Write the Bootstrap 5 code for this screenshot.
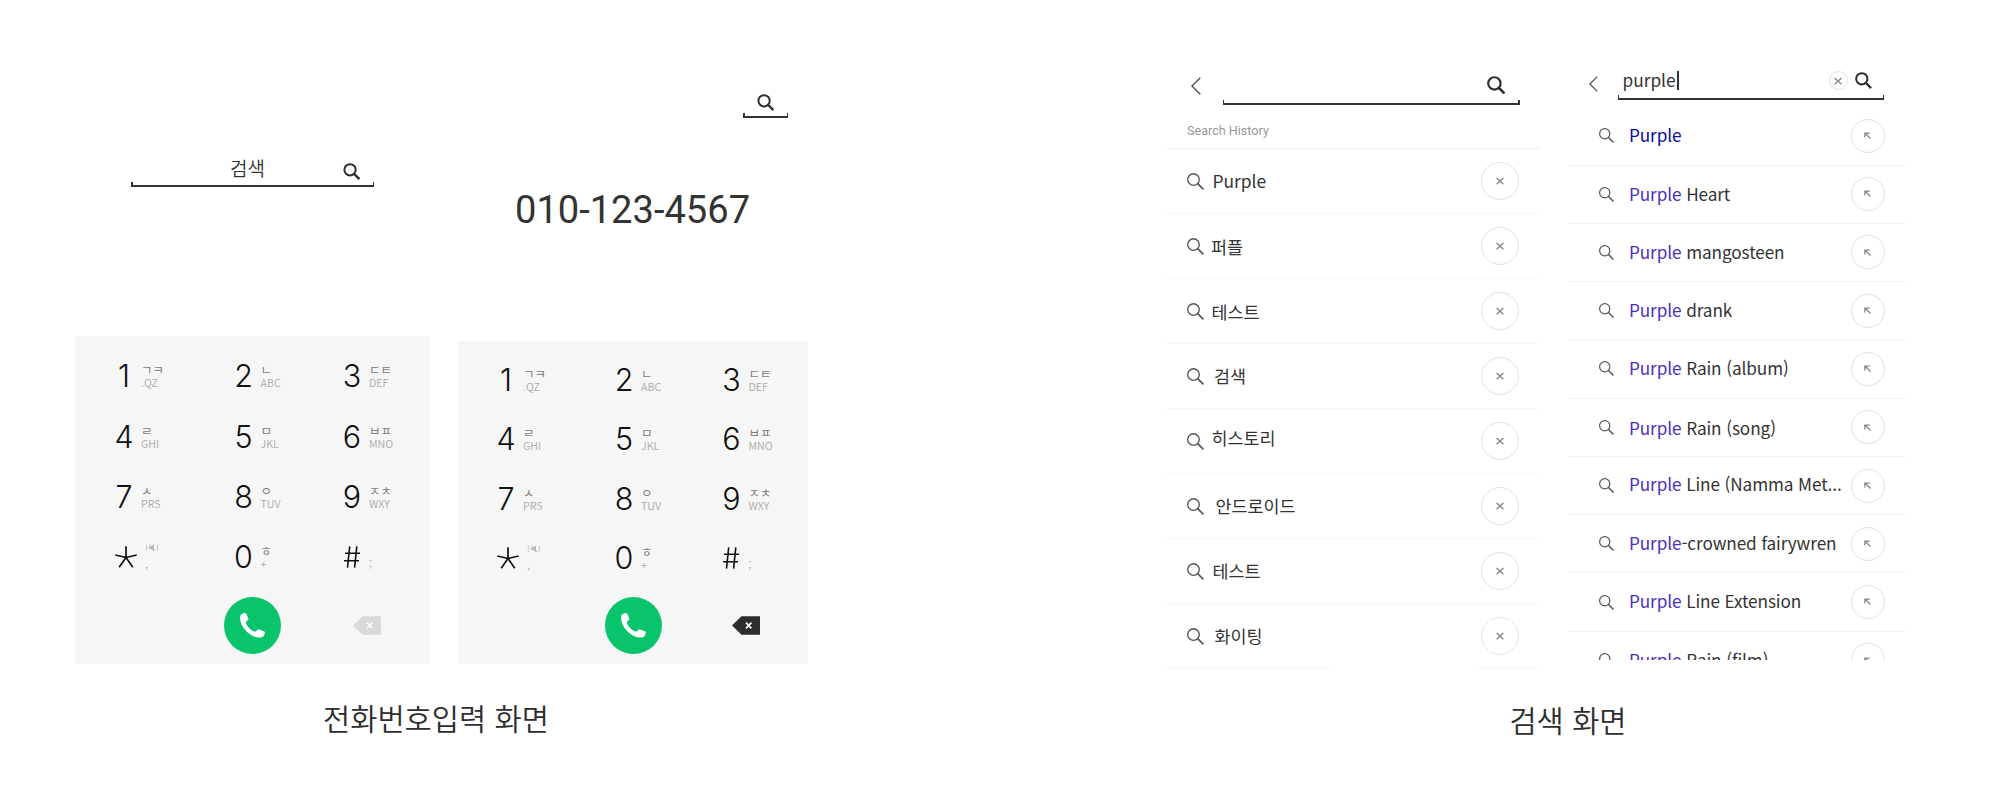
<!DOCTYPE html>
<html lang="ko">
<head>
<meta charset="utf-8">
<meta name="viewport" content="width=device-width, initial-scale=1">
<title>전화번호입력 화면 / 검색 화면</title>
<link href="https://cdn.jsdelivr.net/npm/bootstrap@5.3.0/dist/css/bootstrap.min.css" rel="stylesheet">
<style>
  body { font-family: "Noto Sans CJK KR", "Noto Sans", sans-serif; color: #333; background: #fff; }
  svg { display: block; flex: none; }
  .board { width: 2000px; height: 800px; padding-left: 75px; overflow: hidden; }
  .caption-line { font-size: 29.6px; font-weight: 350; line-height: 40px; height: 40px; color: #2d2d2d; white-space: nowrap; }

  /* underlined search field with short upturned ends */
  .field-line { position: relative; border-bottom: 2px solid #333; }
  .field-line::before, .field-line::after { content: ""; position: absolute; bottom: 0; width: 1.5px; height: 3px; background: #333; }
  .field-line::before { left: 0; }
  .field-line::after { right: 0; }

  .dial-screens { width: 733px; gap: 28px; }
  .dial-a { width: 355px; }
  .dial-b { width: 350px; }
  .dial-top-a { height: 336px; padding: 147px 0 0 56px; }
  .dial-top-b { height: 341px; padding-top: 87px; }
  .field-a { width: 243px; height: 40px; padding: 6px 14px 0 0; }
  .field-a .hint { font-size: 19px; font-weight: 350; line-height: 29px; margin-left: 99px; }
  .field-b { width: 45px; height: 31px; margin-left: 285px; padding: 7px 0 0 14px; }
  .number { font-family: Roboto, sans-serif; font-size: 38.1px; line-height: 44px; margin: 69.5px 0 0 57px; white-space: nowrap; }

  .pad { display: grid; background: #f6f6f6; }
  .pad-a { height: 328px; padding: 10px 0 0 39px; grid-template-columns: 119.5px 108.5px 1fr; grid-template-rows: repeat(4, 60.4px) 75.4px; }
  .pad-b { height: 323px; padding: 9.3px 0 0 38px; grid-template-columns: 118px 107.4px 1fr; grid-template-rows: repeat(4, 59.4px) 75.6px; }
  .digit { width: 20px; margin-right: 7px; display: flex; justify-content: center; font-family: Inter, sans-serif; font-weight: 300; font-size: 30.5px; line-height: 36px; color: #111; }
  .sub { display: flex; flex-direction: column; width: 30px; white-space: nowrap; }
  .sub b { font-weight: 400; font-size: 12.5px; line-height: 13px; height: 13px; color: #808080; }
  .sub i { font-style: normal; font-weight: 350; font-size: 10.7px; line-height: 13px; height: 13px; color: #aaa; }
  .call { width: 57px; height: 57px; border-radius: 50%; background: #0ac46b; margin-left: -10px; }
  .pad-b .call { margin-left: -9.5px; }
  .erase { margin-left: 11px; }

  .search-screens { width: 738px; margin-left: 358.5px; }
  .list-height { height: 700px; }
  .hist { width: 373px; }
  .hist-head { height: 104.5px; padding: 64px 0 0 24px; }
  .hist-head .back { margin: 13px 22px 0 0; }
  .hist-head .field-line { width: 297px; height: 40.5px; padding: 11.5px 14.5px 0 0; }
  .hist-title { font-family: Roboto, sans-serif; font-size: 12.6px; line-height: 16px; color: #999; height: 44.5px; padding: 18px 0 0 20.5px; border-bottom: 1px solid #f1f1f1; }
  .hist-row { height: 65.05px; padding: 0 20.5px 0 20.5px; border-bottom: 1.6px solid #f6f6f6; }
  .hist-row:last-child { border-image: linear-gradient(90deg, #f6f6f6 166.5px, #fff 166.5px, #fff 309px, #f6f6f6 309px) 1; }
  .row-text { font-size: 17.4px; font-weight: 400; line-height: 26px; white-space: nowrap; color: #333; }
  .ring { border: 1px solid #e2e2e2; border-radius: 50%; display: flex; align-items: center; justify-content: center; flex: none; }
  .ring-l { width: 38px; height: 38px; }
  .ring-m { width: 34px; height: 34px; }
  .ring-s { width: 19px; height: 19px; }

  .sugg { width: 337px; margin-left: 28px; height: 660px; overflow: hidden; }
  .sugg-head { height: 107.3px; padding: 62px 0 0 21px; }
  .sugg-head .back { margin: 13.5px 20px 0 0; }
  .sugg-head .field-line { width: 266.5px; height: 37.5px; padding: 2px 12.5px 0 5px; }
  .typed { font-size: 17.3px; line-height: 34px; font-weight: 400; margin-top: -2px; }
  .caret { width: 2px; height: 19px; background: #333; margin-left: 1px; }
  .sugg-row { height: 58.27px; padding: 0 20px 0 31px; border-bottom: 1.5px solid #f5f5f5; }
  .sugg-row .row-text { font-size: 17.2px; letter-spacing: -.1px; margin-left: 15.5px; }
  .hit { color: #4a2fbd; }
  .hit-first { color: #0b0b9e; }
</style>
</head>
<body>
<svg width="0" height="0" class="position-absolute">
  <symbol id="bold-search" viewBox="0 0 18 18"><circle cx="7.2" cy="7.2" r="6" fill="none" stroke="#2d2d2d" stroke-width="2.1"/><path d="M11.4 11.4 17 17" stroke="#2d2d2d" stroke-width="2.5"/></symbol>
  <symbol id="thin-search" viewBox="0 0 17 17"><circle cx="6.5" cy="6.5" r="5.8" fill="none" stroke="#555" stroke-width="1.35"/><path d="M10.7 10.7 16.4 16.4" stroke="#555" stroke-width="1.7"/></symbol>
  <symbol id="back" viewBox="0 0 10 18"><path d="M9.3.7.9 9l8.4 8.3" fill="none" stroke="#444" stroke-width="1.3"/></symbol>
  <symbol id="cross" viewBox="0 0 8 8"><path d="M.6.9l6.8 6.4M7.4.9.6 7.3" stroke="#888" stroke-width="1.4"/></symbol>
  <symbol id="arrow" viewBox="0 0 8 8"><path d="M.9 5.9V1.1h5.3M1.2 1.3 7 7" fill="none" stroke="#888" stroke-width="1.4"/></symbol>
  <symbol id="star" viewBox="0 0 22 22"><path d="M11 .2V11.5M11 11.5.3 9M11 11.5 21.7 9M11 11.5 4.2 21.3M11 11.5 17.8 21.3" stroke="#111" stroke-width="1.7"/></symbol>
  <symbol id="hash" viewBox="0 0 16 22"><path d="M5.7.3 3.5 21.7M12.8.3 10.6 21.7M1 7.3H16M0 14.7H15" stroke="#111" stroke-width="1.6"/></symbol>
  <symbol id="mute" viewBox="0 0 14 8"><path d="M1 .5 2 1.7 1 3 2 4.2 1 5.5 2 6.8M13 .5 12 1.7 13 3 12 4.2 13 5.5 12 6.8" fill="none" stroke="#b8b8b8" stroke-width=".9"/><path d="M4 2.5H6L9 .3V7L6 5H4z" fill="#b8b8b8"/><path d="M4.5.3 10.5 7" stroke="#b8b8b8" stroke-width=".9"/></symbol>
  <symbol id="phone" viewBox="0 0 25 25"><path d="M2.3.8 4.7.1Q6 0 6.6 1.4L8.3 5.4Q8.7 6.6 7.8 7.3L6 8.8V10.5Q8.6 16.2 14.3 18.6L16 18.4 17.4 16.7Q18.3 16.1 19.3 16.4L24 18.2Q25.1 18.8 24.8 20.1L24 22.6Q23.4 23.9 21.9 24.3 13.5 25.6 6.4 18.2-.3 11.2.1 3.8.4 1.4 2.3.8Z" fill="#fff"/></symbol>
</svg>

<main class="board d-flex">
  <section>
    <div class="dial-screens d-flex">
      <div class="dial-a">
        <div class="dial-top-a">
          <div class="field-line field-a d-flex justify-content-between">
            <span class="hint">검색</span>
            <svg width="17.5" height="17" style="margin-top:9.5px"><use href="#bold-search"/></svg>
          </div>
        </div>
        <div class="pad pad-a">
          <div class="d-flex align-items-center"><span class="digit">1</span><span class="sub"><b>ㄱㅋ</b><i>.QZ</i></span></div>
          <div class="d-flex align-items-center"><span class="digit">2</span><span class="sub"><b>ㄴ</b><i>ABC</i></span></div>
          <div class="d-flex align-items-center"><span class="digit">3</span><span class="sub"><b>ㄷㅌ</b><i>DEF</i></span></div>
          <div class="d-flex align-items-center"><span class="digit">4</span><span class="sub"><b>ㄹ</b><i>GHI</i></span></div>
          <div class="d-flex align-items-center"><span class="digit">5</span><span class="sub"><b>ㅁ</b><i>JKL</i></span></div>
          <div class="d-flex align-items-center"><span class="digit">6</span><span class="sub"><b>ㅂㅍ</b><i>MNO</i></span></div>
          <div class="d-flex align-items-center"><span class="digit">7</span><span class="sub"><b>ㅅ</b><i>PRS</i></span></div>
          <div class="d-flex align-items-center"><span class="digit">8</span><span class="sub"><b>ㅇ</b><i>TUV</i></span></div>
          <div class="d-flex align-items-center"><span class="digit">9</span><span class="sub"><b>ㅈㅊ</b><i>WXY</i></span></div>
          <div class="d-flex align-items-center"><span class="digit ps-1"><svg width="22" height="22"><use href="#star"/></svg></span><span class="sub ps-1"><b><svg width="14" height="8"><use href="#mute"/></svg></b><i>,</i></span></div>
          <div class="d-flex align-items-center"><span class="digit">0</span><span class="sub"><b>ㅎ</b><i>+</i></span></div>
          <div class="d-flex align-items-center"><span class="digit"><svg width="16" height="22"><use href="#hash"/></svg></span><span class="sub"><b></b><i>;</i></span></div>
          <div></div>
          <div class="d-flex align-items-center"><span class="call d-flex align-items-center justify-content-center"><svg width="25" height="25"><use href="#phone"/></svg></span></div>
          <div class="d-flex align-items-center"><svg class="erase" width="28" height="19" viewBox="0 0 28 19"><path d="M0 9.5 9.5.3H28V18.7H9.5z" fill="#d9d9d9"/><path d="M14 6.7l5.4 5.6M19.4 6.7 14 12.3" stroke="#fff" stroke-width="1.5"/></svg></div>
        </div>
      </div>
      <div class="dial-b">
        <div class="dial-top-b">
          <div class="field-line field-b"><svg width="17.5" height="17"><use href="#bold-search"/></svg></div>
          <div class="number">010-123-4567</div>
        </div>
        <div class="pad pad-b">
          <div class="d-flex align-items-center"><span class="digit">1</span><span class="sub"><b>ㄱㅋ</b><i>.QZ</i></span></div>
          <div class="d-flex align-items-center"><span class="digit">2</span><span class="sub"><b>ㄴ</b><i>ABC</i></span></div>
          <div class="d-flex align-items-center"><span class="digit">3</span><span class="sub"><b>ㄷㅌ</b><i>DEF</i></span></div>
          <div class="d-flex align-items-center"><span class="digit">4</span><span class="sub"><b>ㄹ</b><i>GHI</i></span></div>
          <div class="d-flex align-items-center"><span class="digit">5</span><span class="sub"><b>ㅁ</b><i>JKL</i></span></div>
          <div class="d-flex align-items-center"><span class="digit">6</span><span class="sub"><b>ㅂㅍ</b><i>MNO</i></span></div>
          <div class="d-flex align-items-center"><span class="digit">7</span><span class="sub"><b>ㅅ</b><i>PRS</i></span></div>
          <div class="d-flex align-items-center"><span class="digit">8</span><span class="sub"><b>ㅇ</b><i>TUV</i></span></div>
          <div class="d-flex align-items-center"><span class="digit">9</span><span class="sub"><b>ㅈㅊ</b><i>WXY</i></span></div>
          <div class="d-flex align-items-center"><span class="digit ps-1"><svg width="22" height="22"><use href="#star"/></svg></span><span class="sub ps-1"><b><svg width="14" height="8"><use href="#mute"/></svg></b><i>,</i></span></div>
          <div class="d-flex align-items-center"><span class="digit">0</span><span class="sub"><b>ㅎ</b><i>+</i></span></div>
          <div class="d-flex align-items-center"><span class="digit"><svg width="16" height="22"><use href="#hash"/></svg></span><span class="sub"><b></b><i>;</i></span></div>
          <div></div>
          <div class="d-flex align-items-center"><span class="call d-flex align-items-center justify-content-center"><svg width="25" height="25"><use href="#phone"/></svg></span></div>
          <div class="d-flex align-items-center"><svg class="erase" width="28" height="19" viewBox="0 0 28 19"><path d="M0 9.5 9.5.3H28V18.7H9.5z" fill="#2d2d2d"/><path d="M14 6.7l5.4 5.6M19.4 6.7 14 12.3" stroke="#fff" stroke-width="1.7"/></svg></div>
        </div>
      </div>
    </div>
    <div class="caption-line text-center" style="margin-top:33.5px;padding-right:11px">전화번호입력 화면</div>
  </section>

  <section class="search-screens">
    <div class="list-height d-flex">
      <div class="hist">
        <div class="hist-head d-flex">
          <svg class="back" width="10" height="18"><use href="#back"/></svg>
          <div class="field-line d-flex justify-content-end"><svg width="18.5" height="18.5"><use href="#bold-search"/></svg></div>
        </div>
        <div class="hist-title">Search History</div>
        <div id="history"></div>
      </div>
      <div class="sugg">
        <div class="sugg-head d-flex">
          <svg class="back" width="9" height="16"><use href="#back"/></svg>
          <div class="field-line d-flex align-items-center">
            <span class="typed">purple</span><span class="caret"></span>
            <span class="ring ring-s ms-auto"><svg width="8" height="8"><use href="#cross"/></svg></span>
            <svg width="17" height="17" style="margin-left:7px"><use href="#bold-search"/></svg>
          </div>
        </div>
        <div id="suggestions"></div>
      </div>
    </div>
    <div class="caption-line text-center" style="padding-left:65px;margin-top:-.5px">검색 화면</div>
  </section>
</main>

<script src="https://cdn.jsdelivr.net/npm/bootstrap@5.3.0/dist/js/bootstrap.bundle.min.js"></script>
<script>
  // label, gap after the icon, vertical nudge
  const historyItems = [["Purple", 8.5, 0], ["퍼플", 7, 0.5], ["테스트", 7.5, 0.5], ["검색", 10, 0], ["히스토리", 7.5, -3], ["안드로이드", 11.5, 0], ["테스트", 8.5, 0], ["화이팅", 10.5, 0]];
  document.getElementById("history").innerHTML = historyItems.map(([t, gap, dy]) => `
    <div class="hist-row d-flex align-items-center">
      <svg width="17" height="17"><use href="#thin-search"/></svg>
      <span class="row-text" style="margin-left:${gap}px;margin-top:${dy * 2}px">${t}</span>
      <span class="ring ring-l ms-auto"><svg width="8" height="8"><use href="#cross"/></svg></span>
    </div>`).join("");

  // text after the matched word, vertical nudge
  const suggestionItems = [["", -1], [" Heart", 0], [" mangosteen", -0.5], [" drank", -0.5], [" Rain (album)", -1.2], [" Rain (song)", 0.8], [" Line (Namma Met...", -1.2], ["-crowned fairywren", -0.8], [" Line Extension", -1], [" Rain (film)", -0.5]];
  document.getElementById("suggestions").innerHTML = suggestionItems.map(([t, dy], i) => `
    <div class="sugg-row d-flex align-items-center">
      <svg width="15" height="15"><use href="#thin-search"/></svg>
      <span class="row-text" style="margin-top:${dy * 2}px"><span class="${i ? "hit" : "hit-first"}">Purple</span>${t}</span>
      <span class="ring ring-m ms-auto"><svg width="7.5" height="7.5"><use href="#arrow"/></svg></span>
    </div>`).join("");
</script>
</body>
</html>
